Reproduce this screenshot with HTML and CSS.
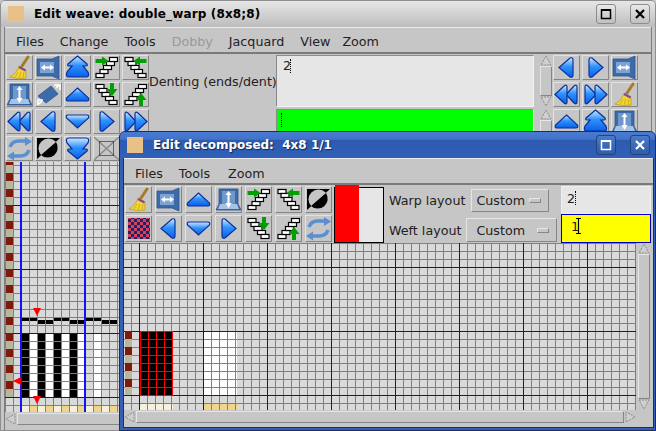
FILE: index.html
```html
<!DOCTYPE html>
<html lang="en">
<head>
    <meta charset="UTF-8">
    <title>Edit weave: double_warp (8x8;8)</title>
    <link rel="stylesheet" href="styles.css">
</head>
<body>
    <!-- shared icons -->
    <svg class="defs" xmlns="http://www.w3.org/2000/svg">
        <defs>
            <linearGradient id="blue" x1="0" y1="0" x2="0" y2="1">
                <stop offset="0" stop-color="#cfe8ff"/>
                <stop offset="0.45" stop-color="#2f92fb"/>
                <stop offset="1" stop-color="#0a5fe8"/>
            </linearGradient>
            <pattern id="lattice" patternUnits="userSpaceOnUse" x="140" y="333" width="8" height="8">
                <rect width="8" height="8" fill="#000"/>
                <rect width="8" height="1" fill="#f00"/>
                <rect width="1" height="8" fill="#f00"/>
            </pattern>
            <pattern id="weave" patternUnits="userSpaceOnUse" width="6" height="6">
                <rect width="6" height="6" fill="#d8405f"/>
                <rect width="3" height="3" fill="#1d2466"/>
                <rect x="3" y="3" width="3" height="3" fill="#1d2466"/>
            </pattern>
            <pattern id="strip" patternUnits="userSpaceOnUse" x="0" y="333" width="8" height="16">
                <rect width="8" height="8" fill="#7f1a08"/>
                <rect y="8" width="8" height="8" fill="#b5b8a0"/>
            </pattern>
        </defs>
        <symbol id="i-up" viewBox="0 0 27 25"><path class="arrow" d="M13.5 6 L24.5 16 Q25.5 19 23 19 H4 Q1.5 19 2.5 16 Z"/></symbol>
        <symbol id="i-down" viewBox="0 0 27 25"><path class="arrow" d="M4 6 H23 Q25.5 6 24.5 9 L13.5 19 L2.5 9 Q1.5 6 4 6 Z"/></symbol>
        <symbol id="i-left" viewBox="0 0 27 25"><path class="arrow" d="M6 12.5 L17 3 Q20 2 20 5 V20 Q20 23 17 22 Z"/></symbol>
        <symbol id="i-right" viewBox="0 0 27 25"><path class="arrow" d="M21 12.5 L10 3 Q7 2 7 5 V20 Q7 23 10 22 Z"/></symbol>
        <symbol id="i-dblup" viewBox="0 0 27 25"><path class="arrow" d="M13.5 1 L23 9 Q24 11 22 11 H19 L24 17 Q26 22 22 22 H5 Q1 22 3 17 L8 11 H5 Q3 11 4 9 Z"/></symbol>
        <symbol id="i-dbldown" viewBox="0 0 27 25"><path class="arrow" d="M5 2 H22 Q26 2 24 7 L19 13 H22 Q24 13 23 15 L13.5 23 L4 15 Q3 13 5 13 H8 L3 7 Q1 2 5 2 Z"/></symbol>
        <symbol id="i-dblleft" viewBox="0 0 27 25"><path class="arrow" d="M13 12.5 L21 4 Q24 2 24 5 V20 Q24 23 21 21 Z"/><path class="arrow" d="M2 12.5 L11 4 Q14 2 14 5 V20 Q14 23 11 21 Z"/></symbol>
        <symbol id="i-dblright" viewBox="0 0 27 25"><path class="arrow" d="M14 12.5 L6 4 Q3 2 3 5 V20 Q3 23 6 21 Z"/><path class="arrow" d="M25 12.5 L16 4 Q13 2 13 5 V20 Q13 23 16 21 Z"/></symbol>

        <symbol id="stair-f" viewBox="0 0 27 25">
            <g class="stair"><rect x="3" y="18.5" width="8" height="4"/><rect x="7" y="14.5" width="8" height="4"/><rect x="10.5" y="10.5" width="8" height="4"/><rect x="13.5" y="6.5" width="8" height="4"/><rect x="16.5" y="2.5" width="8" height="4"/></g>
        </symbol>
        <symbol id="stair-b" viewBox="0 0 27 25">
            <g class="stair"><rect x="3" y="2.5" width="8" height="4"/><rect x="6" y="6.5" width="8" height="4"/><rect x="9" y="10.5" width="8" height="4"/><rect x="12.5" y="14.5" width="8" height="4"/><rect x="16" y="18.5" width="8" height="4"/></g>
        </symbol>
        <symbol id="i-stair-in-r" viewBox="0 0 27 25"><use href="#stair-f"/><path class="go" d="M2.5 4 H9 V1.5 L15.5 6 L9 10.5 V8 H2.5 Z"/></symbol>
        <symbol id="i-stair-in-l" viewBox="0 0 27 25"><use href="#stair-b"/><path class="go" d="M24.5 4 H18 V1.5 L11.5 6 L18 10.5 V8 H24.5 Z"/></symbol>
        <symbol id="i-stair-dn" viewBox="0 0 27 25"><use href="#stair-b"/><path class="go" d="M17 1 H21 V7 H24.5 L19 14 L13.5 7 H17 Z"/></symbol>
        <symbol id="i-stair-up" viewBox="0 0 27 25"><use href="#stair-f"/><path class="go" d="M17 24 H21 V18 H24.5 L19 11 L13.5 18 H17 Z"/></symbol>

        <symbol id="i-broom" viewBox="0 0 27 25">
            <path d="M22 2 L16 11" stroke="#a87a28" stroke-width="3" stroke-linecap="round" fill="none"/>
            <path d="M13 11 L20 15 L20 23 Q13 25 4 22 Q10 19 13 11 Z" fill="#f3d332" stroke="#b89a20" stroke-width="0.7"/>
            <path d="M13 12 L19.5 15.5" stroke="#7d4a9c" stroke-width="2"/>
            <path d="M12 17 L9 22 M15 17 L13 23 M18 17 L17 23" stroke="#c9a51d" stroke-width="0.8"/>
        </symbol>
        <symbol id="i-swap" viewBox="0 0 27 25">
            <path d="M2 4 H17 L24 1 V24 L17 21 H2 Z" fill="#3c6ba8" stroke="#2c5590" stroke-width="0.8"/>
            <rect x="5" y="7" width="14" height="11" fill="#7ea3d3"/>
            <path d="M6 12.5 L10 9.5 V11.5 H15 V9.5 L19 12.5 L15 15.5 V13.5 H10 V15.5 Z" fill="#fff"/>
        </symbol>
        <symbol id="i-updown" viewBox="0 0 27 25">
            <path d="M4 2 H23 V17 L26 23 H1 L4 17 Z" fill="#3c6ba8" stroke="#2c5590" stroke-width="0.8"/>
            <path d="M5 17 H22 L24 22 H3 Z" fill="#a9c2e3"/>
            <rect x="7" y="4" width="13" height="13" fill="#6f97cc"/>
            <path d="M13.5 4 L16.5 8 H14.5 V16 H16.5 L13.5 21 L10.5 16 H12.5 V8 H10.5 Z" fill="#fff"/>
        </symbol>
        <symbol id="i-rotate" viewBox="0 0 27 25">
            <path d="M3 14 L16 4 L23 12 L11 21 Z" fill="#3c6ba8" stroke="#2c5590" stroke-width="0.8"/>
            <path d="M19 3 L25 3 L25 8 M24 3 L21 6" stroke="#fff" stroke-width="1.6" fill="none"/>
            <path d="M3 23 L3 18 L8 18 M4 22 L7 19" stroke="#fff" stroke-width="1.6" fill="none"/>
        </symbol>
        <symbol id="i-refresh" viewBox="0 0 27 25">
            <path d="M4 11 Q6 5 13 5 H20" stroke="#5a8fd0" stroke-width="3.6" fill="none"/>
            <path d="M19 1 L26 5.5 L19 10 Z" fill="#5a8fd0"/>
            <path d="M23 14 Q21 20 14 20 H7" stroke="#5a8fd0" stroke-width="3.6" fill="none"/>
            <path d="M8 15.5 L1 20 L8 24.5 Z" fill="#5a8fd0"/>
        </symbol>
        <symbol id="i-invert" viewBox="0 0 27 25">
            <path d="M2 23 L25 2 H2 Z" fill="#000"/>
            <circle cx="13.5" cy="12.5" r="10" fill="#c6c6c6"/>
            <path d="M6 19 A10 10 0 0 0 21 6 Z" fill="#000"/>
        </symbol>
        <symbol id="i-clear" viewBox="0 0 27 25">
            <path d="M1 1 L26 24 M26 1 L1 24" stroke="#8a8a8a" stroke-width="1.5"/>
            <rect x="6.5" y="5.5" width="14" height="14" fill="none" stroke="#000" stroke-dasharray="1 1"/>
        </symbol>
        <symbol id="i-weave" viewBox="0 0 27 25">
            <rect x="3" y="2" width="22" height="21" fill="url(#weave)"/>
        </symbol>

        <symbol id="s-up" viewBox="0 0 12 11"><path class="tri" d="M6 1 L11 10 H1 Z"/></symbol>
        <symbol id="s-down" viewBox="0 0 12 11"><path class="tri" d="M1 1 H11 L6 10 Z"/></symbol>
        <symbol id="s-left" viewBox="0 0 12 12"><path class="tri" d="M1 6 L10 1 V11 Z"/></symbol>
        <symbol id="s-right" viewBox="0 0 12 12"><path class="tri" d="M11 6 L2 1 V11 Z"/></symbol>
    </svg>

    <!-- weave window -->
    <div class="window back">
        <div class="titlebar">
            <span class="win-icon"></span>
            <span class="win-title">Edit weave: double_warp (8x8;8)</span>
            <span class="win-btn"><svg width="12" height="12"><rect x="1.5" y="2" width="9" height="8.5" fill="none" stroke="#000" stroke-width="1.5"/><rect x="1" y="1" width="10" height="2" fill="#000"/></svg></span>
            <span class="win-btn"><svg width="12" height="12"><path d="M2 2 L10 10 M10 2 L2 10" stroke="#000" stroke-width="2.2"/></svg></span>
        </div>
        <div class="win-body">
            <div class="menubar">
                <span class="menu">Files</span>
                <span class="menu">Change</span>
                <span class="menu">Tools</span>
                <span class="menu off">Dobby</span>
                <span class="menu">Jacquard</span>
                <span class="menu">View</span>
                <span class="menu">Zoom</span>
            </div>

            <div class="toolbar">
                <div class="tools five">
                    <button class="tool"><svg><use href="#i-broom"/></svg></button>
                    <button class="tool"><svg><use href="#i-swap"/></svg></button>
                    <button class="tool"><svg><use href="#i-dblup"/></svg></button>
                    <button class="tool"><svg><use href="#i-stair-in-r"/></svg></button>
                    <button class="tool"><svg><use href="#i-stair-in-l"/></svg></button>
                    <button class="tool"><svg><use href="#i-updown"/></svg></button>
                    <button class="tool"><svg><use href="#i-rotate"/></svg></button>
                    <button class="tool"><svg><use href="#i-up"/></svg></button>
                    <button class="tool"><svg><use href="#i-stair-dn"/></svg></button>
                    <button class="tool"><svg><use href="#i-stair-up"/></svg></button>
                    <button class="tool"><svg><use href="#i-dblleft"/></svg></button>
                    <button class="tool"><svg><use href="#i-left"/></svg></button>
                    <button class="tool"><svg><use href="#i-down"/></svg></button>
                    <button class="tool"><svg><use href="#i-right"/></svg></button>
                    <button class="tool"><svg><use href="#i-dblright"/></svg></button>
                    <button class="tool"><svg><use href="#i-refresh"/></svg></button>
                    <button class="tool"><svg><use href="#i-invert"/></svg></button>
                    <button class="tool"><svg><use href="#i-dbldown"/></svg></button>
                    <button class="tool"><svg><use href="#i-clear"/></svg></button>
                </div>

                <div class="fields">
                    <div class="field-label">Denting (ends/dent)</div>
                    <div class="field grey">2<i class="caret"></i></div>
                    <div class="vscroll">
                        <svg class="sb-btn"><use href="#s-up"/></svg>
                        <div class="thumb"></div>
                        <svg class="sb-btn"><use href="#s-down"/></svg>
                    </div>
                    <div class="field-label">Treadling</div>
                    <div class="field lime"><i class="caret"></i></div>
                    <div class="vscroll">
                        <svg class="sb-btn"><use href="#s-up"/></svg>
                        <div class="thumb"></div>
                        <svg class="sb-btn"><use href="#s-down"/></svg>
                    </div>
                </div>

                <div class="tools three">
                    <button class="tool"><svg><use href="#i-left"/></svg></button>
                    <button class="tool"><svg><use href="#i-right"/></svg></button>
                    <button class="tool"><svg><use href="#i-swap"/></svg></button>
                    <button class="tool"><svg><use href="#i-dblleft"/></svg></button>
                    <button class="tool"><svg><use href="#i-dblright"/></svg></button>
                    <button class="tool"><svg><use href="#i-broom"/></svg></button>
                    <button class="tool"><svg><use href="#i-up"/></svg></button>
                    <button class="tool"><svg><use href="#i-dblup"/></svg></button>
                    <button class="tool"><svg><use href="#i-updown"/></svg></button>
                </div>
            </div>

            <div class="grid grid-back">
                <svg class="marks" width="520" height="250" viewBox="5 162 520 250">
                    <g fill="#000">
                        <rect x="22" y="334" width="8" height="63"/><rect x="38" y="334" width="8" height="63"/>
                        <rect x="54" y="334" width="8" height="63"/><rect x="70" y="334" width="8" height="63"/>
                        <rect x="22" y="318" width="15" height="3"/><rect x="38" y="320" width="15" height="4"/>
                        <rect x="54" y="318" width="15" height="3"/><rect x="70" y="320" width="15" height="4"/>
                        <rect x="86" y="318" width="15" height="3"/><rect x="102" y="320" width="15" height="4"/>
                    </g>
                    <g fill="#fff">
                        <rect x="30" y="334" width="8" height="63"/><rect x="46" y="334" width="8" height="63"/>
                        <rect x="62" y="334" width="8" height="63"/><rect x="78" y="334" width="7" height="63"/>
                        <rect x="94" y="334" width="8" height="63"/>
                    </g>
                    <g fill="#f6f1dc">
                        <rect x="22" y="405" width="8" height="7"/><rect x="38" y="405" width="8" height="7"/>
                        <rect x="54" y="405" width="8" height="7"/><rect x="70" y="405" width="8" height="7"/>
                        <rect x="86" y="405" width="8" height="7"/><rect x="102" y="405" width="8" height="7"/>
                    </g>
                    <g fill="#f0d68c">
                        <rect x="30" y="405" width="8" height="7"/><rect x="46" y="405" width="8" height="7"/>
                        <rect x="62" y="405" width="8" height="7"/><rect x="78" y="405" width="8" height="7"/>
                        <rect x="94" y="405" width="8" height="7"/><rect x="110" y="405" width="8" height="7"/>
                    </g>
                </svg>
                <svg class="over" width="520" height="250" viewBox="5 162 520 250">
                    <rect x="6" y="162" width="7" height="235" fill="url(#strip)"/>
                    <path d="M33 308 H41 L37 316 Z M33 396 H41 L37 404 Z M21 377 V385 L13 381 Z" fill="#f00"/>
                </svg>
            </div>
            <div class="hscroll">
                <svg class="sb-btn-h"><use href="#s-left"/></svg>
                <div class="thumb"></div>
            </div>
        </div>
    </div>

    <!-- decomposed window -->
    <div class="window front">
        <div class="titlebar">
            <span class="win-icon"></span>
            <span class="win-title">Edit decomposed:  4x8 1/1</span>
            <span class="win-btn"><svg width="12" height="12"><rect x="1.5" y="2" width="9" height="8.5" fill="none" stroke="#fff" stroke-width="1.5"/><rect x="1" y="1" width="10" height="2" fill="#fff"/></svg></span>
            <span class="win-btn"><svg width="12" height="12"><path d="M2 2 L10 10 M10 2 L2 10" stroke="#fff" stroke-width="2.2"/></svg></span>
        </div>
        <div class="win-body">
            <div class="menubar">
                <span class="menu">Files</span>
                <span class="menu">Tools</span>
                <span class="menu">Zoom</span>
            </div>

            <div class="toolbar">
                <div class="tools seven">
                    <button class="tool"><svg><use href="#i-broom"/></svg></button>
                    <button class="tool"><svg><use href="#i-swap"/></svg></button>
                    <button class="tool"><svg><use href="#i-up"/></svg></button>
                    <button class="tool"><svg><use href="#i-updown"/></svg></button>
                    <button class="tool"><svg><use href="#i-stair-in-r"/></svg></button>
                    <button class="tool"><svg><use href="#i-stair-in-l"/></svg></button>
                    <button class="tool"><svg><use href="#i-invert"/></svg></button>
                    <button class="tool"><svg><use href="#i-weave"/></svg></button>
                    <button class="tool"><svg><use href="#i-left"/></svg></button>
                    <button class="tool"><svg><use href="#i-down"/></svg></button>
                    <button class="tool"><svg><use href="#i-right"/></svg></button>
                    <button class="tool"><svg><use href="#i-stair-dn"/></svg></button>
                    <button class="tool"><svg><use href="#i-stair-up"/></svg></button>
                    <button class="tool"><svg><use href="#i-refresh"/></svg></button>
                </div>

                <div class="swatch"><span class="swatch-red"></span><span class="swatch-grey"></span></div>

                <div class="layouts">
                    <div class="layout-row warp">
                        <span>Warp layout</span>
                        <span class="dropdown">Custom<i class="drop-mark"></i></span>
                    </div>
                    <div class="layout-row weft">
                        <span>Weft layout</span>
                        <span class="dropdown">Custom<i class="drop-mark"></i></span>
                    </div>
                </div>

                <div class="entries">
                    <div class="entry grey">2<i class="caret"></i></div>
                    <div class="entry yellow">1<svg class="ibeam" width="7" height="16"><path d="M1 .5 H6 M1 15.5 H6 M3.5 0 V16" stroke="#000" stroke-width="1.2" fill="none"/></svg></div>
                </div>
            </div>

            <div class="editor">
                <div class="grid grid-front">
                    <svg class="marks" width="512" height="167" viewBox="124 245 512 167">
                        <rect x="204" y="334" width="33" height="63" fill="#fff"/>
                        <rect x="140" y="405" width="33" height="7" fill="#f6f1dc"/>
                        <rect x="204" y="405" width="33" height="7" fill="#f0d68c"/>
                    </svg>
                    <svg class="over" width="512" height="167" viewBox="124 245 512 167">
                        <rect x="125" y="333" width="7" height="64" fill="url(#strip)"/>
                        <rect x="140" y="333" width="33" height="65" fill="url(#lattice)"/>
                    </svg>
                </div>
                <div class="vscroll tall">
                    <svg class="sb-btn"><use href="#s-up"/></svg>
                    <div class="thumb"></div>
                    <svg class="sb-btn"><use href="#s-down"/></svg>
                </div>
            </div>
            <div class="hscroll">
                <svg class="sb-btn-h"><use href="#s-left"/></svg>
                <div class="thumb"></div>
                <svg class="sb-btn-h"><use href="#s-right"/></svg>
            </div>
        </div>
    </div>
</body>
</html>
```

FILE: styles.css
```css
body {
    margin: 0;
    width: 656px;
    height: 431px;
    overflow: hidden;
    background: #c6c6c6;
    font-family: "DejaVu Sans", sans-serif;
    font-size: 12.7px;
    color: #222;
}

.defs {
    display: block;
    width: 0;
    height: 0;
}

/* svg bits */
.arrow {
    fill: url(#blue);
    stroke: #0a2f9c;
    stroke-width: 1.2;
}

.stair rect {
    fill: #fff;
    stroke: #000;
    stroke-width: 1.2;
}

.go { fill: #00a000; }

.tri {
    fill: #cfcfcf;
    stroke: #8c8c8c;
    stroke-dasharray: 2 1;
}

/* windows */
.window {
    position: absolute;
    box-sizing: border-box;
    display: flex;
    flex-direction: column;
    overflow: hidden;
}

.back {
    left: 0;
    top: 0;
    width: 656px;
    height: 431px;
    background: #c6c6c6;
    border: 1px solid #8e8e8e;
    border-radius: 5px 5px 0 0;
}

.front {
    z-index: 5;
    left: 119px;
    top: 131px;
    width: 537px;
    height: 300px;
    background: #3560b5;
    border: 1px solid #1b2f5e;
    border-radius: 6px 6px 0 0;
}

.titlebar {
    flex: none;
    display: flex;
    align-items: center;
    height: 26px;
    padding: 0 4px 0 7px;
    background: linear-gradient(#e6e6e6, #d6d6d6 40%, #bcbcbc);
}

.front .titlebar {
    height: 26px;
    background: linear-gradient(#4a7bd2, #4273c9 28%, #2d5bb0 32%, #3060b8);
}

.win-icon {
    width: 16px;
    height: 16px;
    background: #e8c088;
    margin-right: 10px;
}

.win-title {
    flex: 1;
    font-weight: bold;
    font-size: 12px;
    letter-spacing: 0.15px;
    white-space: pre;
    color: #000;
}

.front .win-title {
    color: #fff;
    letter-spacing: 0;
    text-shadow: 1px 1px 1px #12244f;
}

.win-btn {
    display: flex;
    align-items: center;
    justify-content: center;
    box-sizing: border-box;
    width: 20px;
    height: 20px;
    margin-left: 14px;
    border: 1px solid #8c8c8c;
    border-radius: 3px;
    background: linear-gradient(#e8e8e8, #c0c0c0);
}

.back .win-btn:last-child { margin-right: 1px; }

.front .win-btn {
    border-color: #23437f;
    background: linear-gradient(#4b7ac8, #2f5cab);
}

.front .win-btn:last-child { margin-right: 1px; }

.win-body {
    flex: 1;
    display: flex;
    flex-direction: column;
    min-height: 0;
    background: #c6c6c6;
}

.back .win-body {
    margin: 0 3px;
    border-left: 1px solid #7d7d7d;
    border-right: 1px solid #7d7d7d;
}

.front .win-body {
    margin: 0 1px 2px 3px;
    border: 1px solid #2a2f40;
    border-top: 0;
}

/* menu */
.menubar {
    flex: none;
    display: flex;
    align-items: center;
    box-sizing: border-box;
    height: 27px;
    padding: 2px 0 0 3px;
    border-top: 1px solid #ececec;
    border-bottom: 2px solid #7a7a7a;
}

.front .menubar { padding-top: 4px; }

.menu { padding: 0 8px; }

.back .menu:last-child { margin-left: -4px; }
.front .menu:last-child { margin-left: 2px; }

.off { color: #999; }

/* toolbars */
.toolbar { flex: none; display: flex; }

.back .toolbar {
    height: 108px;
    padding: 1px 0 0 1px;
    box-sizing: border-box;
}

.tools {
    display: grid;
    grid-auto-rows: 25px;
    gap: 2px;
    align-content: start;
}

.five { grid-template-columns: repeat(5, 27px); }
.three { grid-template-columns: repeat(3, 27px); margin-left: 1px; }

.seven {
    grid-template-columns: repeat(7, 27px);
    grid-auto-rows: 27px;
    column-gap: 3px;
    margin: 1px 0 0 1px;
}

.tool {
    display: flex;
    align-items: center;
    justify-content: center;
    padding: 0;
    box-sizing: border-box;
    background: #c6c6c6;
    border: 1px solid;
    border-color: #e2e2e2 #858585 #858585 #e2e2e2;
}

.tool svg { width: 27px; height: 25px; flex: none; }

.fields {
    display: grid;
    grid-template-columns: 127px 258px 18px;
    grid-template-rows: 52px 52px;
    row-gap: 2px;
}

.field-label {
    align-self: center;
    text-align: center;
    white-space: nowrap;
}

.field {
    position: relative;
    box-sizing: border-box;
    padding: 2px 0 0 6px;
    border: 1px solid;
    border-color: #8a8a8a #f4f4f4 #f4f4f4 #8a8a8a;
}

.grey { background: #e6e6e6; }
.lime { background: #00ff00; }

.caret {
    position: absolute;
    left: 13px;
    top: 3px;
    height: 14px;
    border-left: 1px dotted #000;
}

.field.lime .caret { left: 4px; }

/* scrollbars */
.vscroll {
    justify-self: end;
    display: flex;
    flex-direction: column;
    flex: none;
    width: 12px;
}

.tall { margin-left: 2px; height: 167px; }

.sb-btn { display: block; flex: none; width: 12px; height: 11px; }

.sb-btn-h { display: block; flex: none; width: 12px; height: 12px; }

.thumb {
    flex: 1;
    box-sizing: border-box;
    background: #c6c6c6;
    border: 1px solid;
    border-color: #e6e6e6 #858585 #858585 #e6e6e6;
}

.hscroll {
    flex: none;
    display: flex;
    height: 12px;
    margin-top: 1px;
    width: 512px;
}

/* front toolbar extras */
.swatch {
    position: relative;
    display: flex;
    box-sizing: border-box;
    width: 50px;
    height: 56px;
    margin: 2px 0 0 2px;
    border: 1px solid #000;
}

.swatch::before {
    content: "";
    position: absolute;
    left: 0;
    top: -3px;
    width: 24px;
    height: 3px;
    background: #f00;
}

.swatch-red { width: 24px; background: #f00; }
.swatch-grey { flex: 1; background: #e6e6e6; }

.layouts {
    width: 172px;
    margin-left: 5px;
    padding-top: 4px;
    display: flex;
    flex-direction: column;
    gap: 6px;
}

.layout-row {
    display: flex;
    align-items: center;
    white-space: nowrap;
}

.warp { height: 23px; gap: 6px; }
.weft { height: 24px; gap: 5px; }

.dropdown {
    display: flex;
    align-items: center;
    justify-content: space-between;
    box-sizing: border-box;
    height: 100%;
    padding: 0 7px 0 4px;
    border: 1px solid;
    border-color: #e6e6e6 #858585 #858585 #e6e6e6;
}

.warp .dropdown { width: 78px; }
.weft .dropdown { width: 91px; padding-left: 9px; }

.drop-mark {
    width: 12px;
    height: 5px;
    box-sizing: border-box;
    background: #c6c6c6;
    border: 1px solid;
    border-color: #e6e6e6 #858585 #858585 #e6e6e6;
}

.entries {
    width: 90px;
    margin-top: 1px;
    display: flex;
    flex-direction: column;
}

.entry {
    position: relative;
    box-sizing: border-box;
    padding: 4px 0 0 5px;
    border: 1px solid #f0f0f0;
}

.entry.grey { height: 28px; }
.entry.yellow { height: 29px; background: #ff0; border-color: #0000c0; padding-left: 9px; }

.entry .caret { left: 13px; top: 4px; }

.ibeam { position: absolute; left: 13px; top: 3px; }

/* editor grids */
.editor { flex: none; display: flex; }

.grid {
    position: relative;
    flex: none;
    background: #d9d9d9;
    overflow: hidden;
}

.grid::after {
    content: "";
    position: absolute;
    inset: 0;
    z-index: 1;
    background-size: 64px 100%, 100% 64px, 8px 100%, 100% 8px;
}

.grid-back { width: 520px; height: 250px; }

/* weave grid has the wider, brighter warp lines */
.grid-back::after {
    background-image:
        linear-gradient(90deg, #1414f0 2px, transparent 2px),
        linear-gradient(#0a0ac8 1px, transparent 1px),
        linear-gradient(90deg, #808080 1px, transparent 1px),
        linear-gradient(#808080 1px, transparent 1px);
    background-position: 15px 0, 0 43px, 0 0, 0 3px;
}

.grid-front { width: 512px; height: 167px; }

.grid-front::after {
    background-image:
        linear-gradient(90deg, #0a0ac8 1px, transparent 1px),
        linear-gradient(#0a0ac8 1px, transparent 1px),
        linear-gradient(90deg, #808080 1px, transparent 1px),
        linear-gradient(#808080 1px, transparent 1px);
    background-position: 15px 0, 0 24px, 7px 0, 0 0;
}

.marks, .over {
    position: absolute;
    left: 0;
    top: 0;
}

.over { z-index: 2; }
```
